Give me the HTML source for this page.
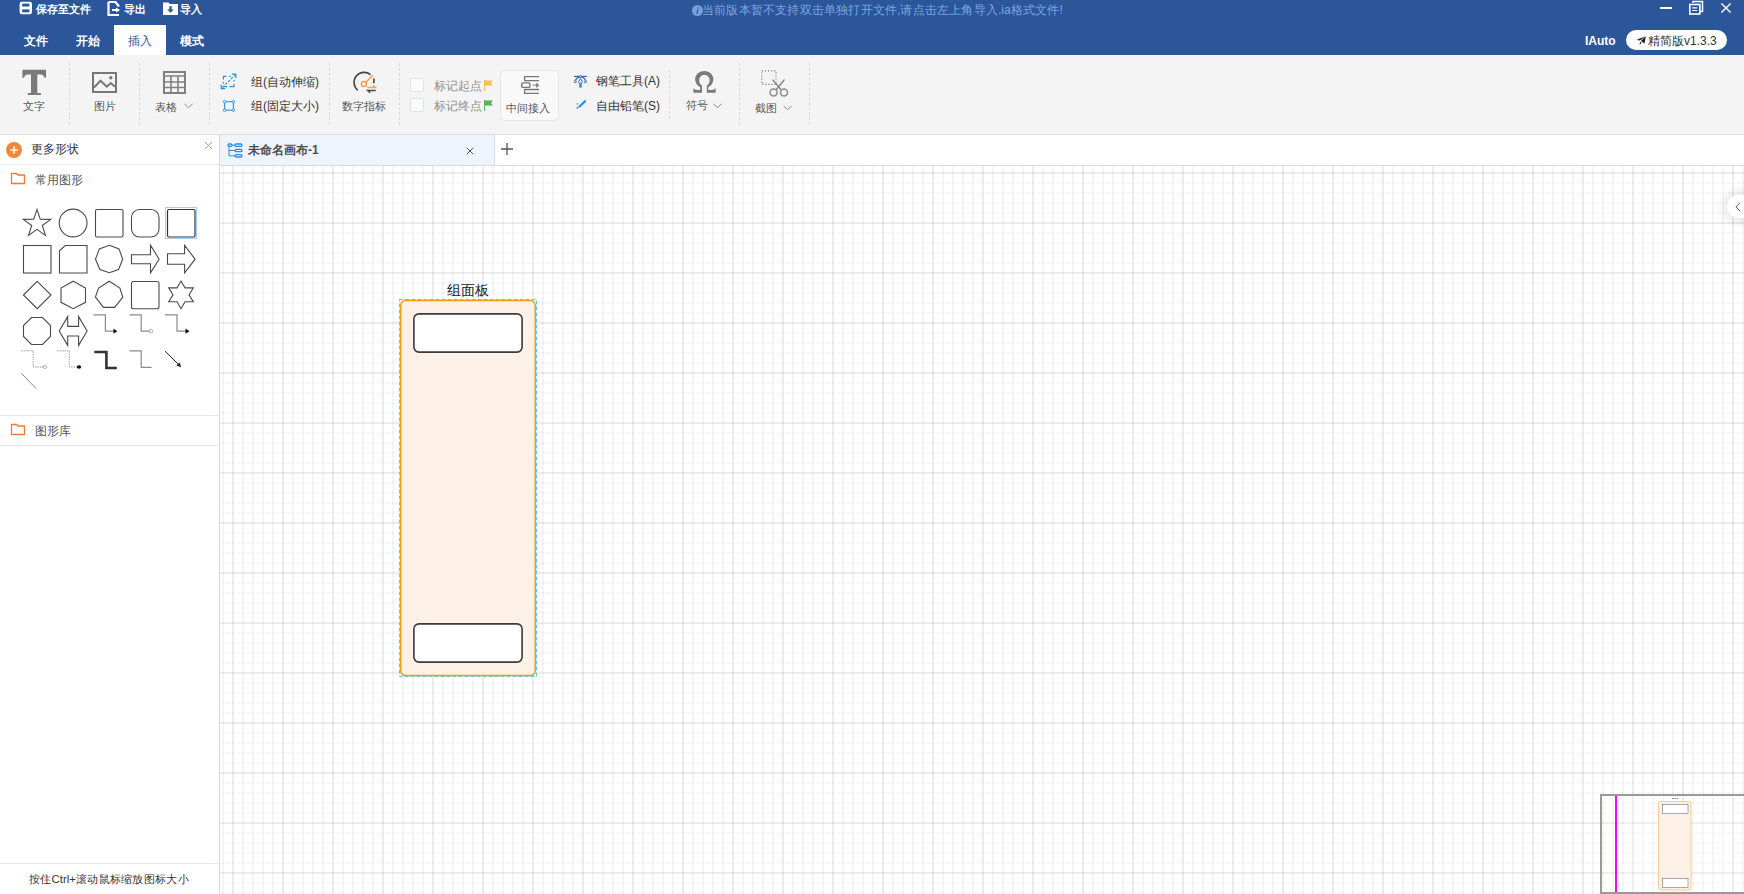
<!DOCTYPE html>
<html><head><meta charset="utf-8">
<style>
*{margin:0;padding:0;box-sizing:border-box}
html,body{width:1744px;height:894px;overflow:hidden;background:#fff;font-family:"Liberation Sans",sans-serif;}
.a{position:absolute}
svg{display:block}
#title{left:0;top:0;width:1744px;height:55px;background:#2b579a}
.wt{color:#fff;font-size:11px;font-weight:bold;white-space:nowrap;line-height:12px}
.menu{color:#fff;font-size:12px;line-height:14px;white-space:nowrap;font-weight:bold;width:52px;text-align:center}
#toolbar{left:0;top:55px;width:1744px;height:80px;background:#f4f4f4;border-bottom:1px solid #dcdcdc}
.sep{width:0;border-left:1px dashed #d9d9d9}
.lbl{font-size:11px;color:#555;line-height:12px;white-space:nowrap}
.txt{font-size:12px;color:#333;line-height:13px;white-space:nowrap}
#left{left:0;top:135px;width:220px;height:759px;background:#fff;border-right:1px solid #d9d9d9}
#tabbar{left:220px;top:135px;width:1524px;height:31px;background:#fff;border-bottom:1px solid #d9d9d9}
#canvas{left:220px;top:166px;width:1524px;height:728px;background:#fff}
i{font-style:normal;display:inline-block;width:1em;text-align:center;position:relative}
.nocjk i{-webkit-text-fill-color:transparent}
.nocjk i::after{content:"";position:absolute;left:.09em;right:.09em;top:50%;height:.82em;margin-top:-.41em;background:currentColor;opacity:.42}
</style></head><body>
<div id="title" class="a">
  <!-- save icon -->
  <svg class="a" style="left:19px;top:1px" width="14" height="14" viewBox="19 1 14 14"><rect x="19.6" y="1.7" width="12.4" height="12.6" rx="2.2" fill="#fff"/><rect x="22.2" y="3.6" width="7.2" height="2.9" fill="#2b579a"/><rect x="22.2" y="9.4" width="7.2" height="2.9" fill="#2b579a"/></svg>
  <div class="a wt" style="left:36px;top:3px"><i>保</i><i>存</i><i>至</i><i>文</i><i>件</i></div>
  <!-- export icon -->
  <svg class="a" style="left:106px;top:0px" width="16" height="17" viewBox="0 0 16 17"><path d="M2.5 2h7l3.5 4.5M2.5 2v13h10.5" fill="none" stroke="#fff" stroke-width="2.2"/><path d="M6 10h5" stroke="#fff" stroke-width="2"/><path d="M10 7.5l4 2.5-4 2.5z" fill="#fff"/></svg>
  <div class="a wt" style="left:124px;top:3px"><i>导</i><i>出</i></div>
  <!-- import icon -->
  <svg class="a" style="left:162px;top:1px" width="17" height="15" viewBox="0 0 17 15"><path d="M1 1.5h5.5l1.5 1.5h8v11H1z" fill="#fff"/><path d="M7.3 5.3h2.4v3.2h2.2l-3.4 3.2-3.4-3.2h2.2z" fill="#2b579a"/></svg>
  <div class="a wt" style="left:180px;top:3px"><i>导</i><i>入</i></div>
  <!-- info -->
  <svg class="a" style="left:692px;top:5px" width="11" height="11" viewBox="0 0 11 11"><circle cx="5.5" cy="5.5" r="5.5" fill="#76a0dc"/><path d="M6.2 2.2v1.2M5.8 4.6l-.9 4.4" stroke="#2b579a" stroke-width="1.2"/></svg>
  <div class="a" style="left:702px;top:3px;font-size:12.2px;line-height:14px;color:#7ba4e0;white-space:nowrap"><i>当</i><i>前</i><i>版</i><i>本</i><i>暂</i><i>不</i><i>支</i><i>持</i><i>双</i><i>击</i><i>单</i><i>独</i><i>打</i><i>开</i><i>文</i><i>件</i>,<i>请</i><i>点</i><i>击</i><i>左</i><i>上</i><i>角</i><i>导</i><i>入</i>.ia<i>格</i><i>式</i><i>文</i><i>件</i>!</div>
  <!-- window controls -->
  <div class="a" style="left:1660px;top:7px;width:12px;height:1.7px;background:#fff"></div>
  <svg class="a" style="left:1688px;top:0px" width="16" height="16" viewBox="0 0 16 16"><path d="M5 3V1.5h9.5v10H12" fill="none" stroke="#fff" stroke-width="1.5"/><rect x="1.8" y="4.5" width="10" height="9.5" fill="none" stroke="#fff" stroke-width="1.6"/><path d="M4.2 7.8h5M4.2 10.5h5" stroke="#fff" stroke-width="1.2"/></svg>
  <svg class="a" style="left:1720px;top:2px" width="12" height="12" viewBox="0 0 12 12"><path d="M1.4 1.4l9.2 9.2M10.6 1.4l-9.2 9.2" stroke="#fff" stroke-width="1.4"/></svg>
  <!-- menu -->
  <div class="a menu" style="left:10px;top:34px"><i>文</i><i>件</i></div>
  <div class="a menu" style="left:62px;top:34px"><i>开</i><i>始</i></div>
  <div class="a" style="left:114px;top:25px;width:52px;height:30px;background:#fff"></div>
  <div class="a menu" style="left:114px;top:34px;color:#2b579a;font-weight:normal"><i>插</i><i>入</i></div>
  <div class="a menu" style="left:166px;top:34px"><i>模</i><i>式</i></div>
  <div class="a" style="left:1585px;top:34px;font-size:12px;font-weight:bold;color:#fff;line-height:14px">IAuto</div>
  <div class="a" style="left:1626px;top:30px;width:101px;height:20px;border-radius:10px;background:#fff"></div>
  <svg class="a" style="left:1636px;top:35px" width="11" height="11" viewBox="1636 35 11 11"><path d="M1637.2 39.5L1645.8 36.3L1640.3 40.2L1638.6 40.6Z" fill="#0f1a33"/><path d="M1645.8 36.3L1644.5 43.4L1641 41.1Z" fill="#0f1a33"/><path d="M1640.1 41.7L1641.6 42.7L1639.6 45Z" fill="#0f1a33"/></svg>
  <div class="a" style="left:1648px;top:34px;font-size:12px;color:#333;line-height:14px;white-space:nowrap"><i>精</i><i>简</i><i>版</i>v1.3.3</div>
</div>

<div id="toolbar" class="a">
  <div class="a sep" style="left:69px;top:8px;height:62px"></div>
  <div class="a sep" style="left:139px;top:8px;height:62px"></div>
  <div class="a sep" style="left:209px;top:8px;height:62px"></div>
  <div class="a sep" style="left:329px;top:8px;height:62px"></div>
  <div class="a sep" style="left:399px;top:8px;height:62px"></div>
  <div class="a sep" style="left:669px;top:15px;height:49px"></div>
  <div class="a sep" style="left:739px;top:8px;height:62px"></div>
  <div class="a sep" style="left:809px;top:8px;height:62px"></div>

  <!-- T -->
  <svg class="a" style="left:20px;top:13px" width="30" height="30" viewBox="20 68 30 30"><path d="M22.4 69.8H46V77.8H44.6Q43.5 75 41.5 74.6H37.3V93H40.9V95H27.8V93H31V74.6H26.9Q24.9 75 23.8 77.8H22.4Z" fill="#7a7a7a"/></svg>
  <div class="a lbl" style="left:23px;top:45px"><i>文</i><i>字</i></div>
  <!-- image -->
  <svg class="a" style="left:92px;top:17px" width="25" height="21" viewBox="0 0 25 21"><rect x="1" y="1" width="23" height="19" fill="none" stroke="#777" stroke-width="2"/><path d="M2 15.5l6.5-6.8 6.3 6 3.9-3.6 4.3 3.6" fill="none" stroke="#777" stroke-width="2"/><circle cx="18.8" cy="5.7" r="1.7" fill="#777"/></svg>
  <div class="a lbl" style="left:94px;top:45px"><i>图</i><i>片</i></div>
  <!-- table -->
  <svg class="a" style="left:163px;top:16px" width="23" height="23" viewBox="0 0 23 23"><rect x="1" y="1" width="21" height="21" fill="none" stroke="#808080" stroke-width="2"/><path d="M1 5h21M1 11h21M1 16.5h21M8 5v17M15 5v17" stroke="#808080" stroke-width="1.6"/></svg>
  <div class="a lbl" style="left:155px;top:46px"><i>表</i><i>格</i></div>
  <svg class="a" style="left:184px;top:48px" width="9" height="6" viewBox="0 0 9 6"><path d="M.5 .8l4 4 4-4" fill="none" stroke="#888" stroke-width="1"/></svg>
  <!-- group icons -->
  <svg class="a" style="left:218px;top:16px" width="22" height="20" viewBox="218 71 22 20"><path d="M223.4 79.5V76.4H226.5M229 76.4H230.5M223.4 82V83.5M223.4 86V86.7H227M229.5 86.7H234V84M234 81.5V80" fill="none" stroke="#2a8fde" stroke-width="1.2"/><path d="M222.5 87.5L235 75" stroke="#2a8fde" stroke-width="1.1" stroke-dasharray="2.5 1.5"/><path d="M232 74.1H235.8V77.9M221.3 84.8V88.6H225.1" fill="none" stroke="#2a8fde" stroke-width="1.2"/></svg>
  <div class="a txt" style="left:251px;top:21px"><i>组</i>(<i>自</i><i>动</i><i>伸</i><i>缩</i>)</div>
  <svg class="a" style="left:220px;top:44px" width="18" height="15" viewBox="220 99 18 15"><rect x="224.6" y="101.7" width="8.8" height="8.5" fill="none" stroke="#2a8fde" stroke-width="1.1"/><g fill="#fff" stroke="#2a8fde" stroke-width="0.9"><circle cx="224.6" cy="101.7" r="1.3"/><circle cx="233.4" cy="101.7" r="1.3"/><circle cx="224.6" cy="110.2" r="1.3"/><circle cx="233.4" cy="110.2" r="1.3"/></g></svg>
  <div class="a txt" style="left:251px;top:45px"><i>组</i>(<i>固</i><i>定</i><i>大</i><i>小</i>)</div>
  <!-- gauge -->
  <svg class="a" style="left:348px;top:11px" width="32" height="32" viewBox="348 66 32 32"><path d="M357.8 90.3A10 10 0 0 1 370.5 74.6" fill="none" stroke="#454545" stroke-width="1.6"/><path d="M373.9 78.5V83.2" stroke="#454545" stroke-width="1.6"/><circle cx="363.9" cy="84.1" r="2.5" fill="none" stroke="#f5a04a" stroke-width="1.5"/><path d="M365.7 82.3L373 75.3" stroke="#f5a04a" stroke-width="1.5"/><path d="M367.3 87.5H375.5L373 85.2" fill="none" stroke="#f5a04a" stroke-width="1.3"/><path d="M375.7 90.5H367.5L370.2 92.8" fill="none" stroke="#454545" stroke-width="1.3"/><g fill="#f8c89a"><circle cx="363.8" cy="75" r=".6"/><circle cx="357" cy="82.7" r=".6"/><circle cx="371" cy="82.7" r=".6"/></g></svg>
  <div class="a lbl" style="left:342px;top:45px"><i>数</i><i>字</i><i>指</i><i>标</i></div>
  <!-- checkboxes -->
  <div class="a" style="left:410px;top:23px;width:14px;height:14px;border:1px solid #e0e3ea;border-radius:2px;background:#fbfbfb"></div>
  <div class="a" style="left:410px;top:43px;width:14px;height:14px;border:1px solid #e0e3ea;border-radius:2px;background:#fbfbfb"></div>
  <div class="a txt" style="left:434px;top:25px;color:#8e8e8e"><i>标</i><i>记</i><i>起</i><i>点</i></div>
  <div class="a txt" style="left:434px;top:45px;color:#8e8e8e"><i>标</i><i>记</i><i>终</i><i>点</i></div>
  <svg class="a" style="left:484px;top:25px" width="9" height="11" viewBox="0 0 9 11"><path d="M.5 0v11" stroke="#f7c04e" stroke-width="1.3"/><path d="M1 .5h8l-2 2.5 2 2.5H1z" fill="#f7c055"/></svg>
  <svg class="a" style="left:484px;top:45px" width="9" height="11" viewBox="0 0 9 11"><path d="M.5 0v11" stroke="#5cb85c" stroke-width="1.3"/><path d="M1 .5h8l-2 2.5 2 2.5H1z" fill="#56b25a"/></svg>
  <!-- 中间接入 button -->
  <div class="a" style="left:500px;top:15px;width:59px;height:51px;border:1px solid #e6e6e6;border-radius:5px;background:#f9f9f9"></div>
  <svg class="a" style="left:518px;top:18px" width="24" height="22" viewBox="518 73 24 22"><path d="M539 76.6H524.6V80.6H539M539 89.5H524.6V93.3H539" fill="none" stroke="#777" stroke-width="1.3"/><rect x="521.7" y="82.9" width="8.2" height="4.5" rx="1" fill="none" stroke="#777" stroke-width="1.4"/><path d="M532.8 85.2H537" stroke="#999" stroke-width="1.3"/><path d="M536.3 82.5L539.2 85.2L536.3 87.9Z" fill="#777"/></svg>
  <div class="a lbl" style="left:506px;top:47px"><i>中</i><i>间</i><i>接</i><i>入</i></div>
  <!-- pen -->
  <svg class="a" style="left:572px;top:18px" width="17" height="17" viewBox="572 73 17 17"><path d="M574.1 76.4H586.9" stroke="#2e5ea8" stroke-width="1.1"/><path d="M580.5 76.6Q576.5 77.5 575.3 80.6M580.5 76.6Q584.5 77.5 585.5 80.6" fill="none" stroke="#2e5ea8" stroke-width="1.1"/><circle cx="580.5" cy="76.4" r="1" fill="#fff" stroke="#2e5ea8" stroke-width=".9"/><circle cx="575.3" cy="81.6" r="1.1" fill="#fff" stroke="#2e5ea8" stroke-width=".9"/><circle cx="585.5" cy="81.6" r="1.1" fill="#fff" stroke="#2e5ea8" stroke-width=".9"/><path d="M580.5 78.6L578.7 81.6L579.5 83.8H581.5L582.3 81.6Z" fill="none" stroke="#2e5ea8" stroke-width="1"/><rect x="579.3" y="84.2" width="2.4" height="3.4" fill="#3b7bd0"/><path d="M576.5 83.5L578.5 86.5M584.5 83.5L582.5 86.5" stroke="#b8c4d8" stroke-width=".7" stroke-dasharray="1 1"/></svg>
  <div class="a txt" style="left:596px;top:20px"><i>钢</i><i>笔</i><i>工</i><i>具</i>(A)</div>
  <svg class="a" style="left:574px;top:44px" width="14" height="14" viewBox="574 99 14 14"><path d="M579.6 106.5L585 101.2" stroke="#2a90e0" stroke-width="2.3" stroke-linecap="round"/><path d="M577.3 103.2V104.6M578 106.5L576.8 108.8" stroke="#2a90e0" stroke-width="1.3"/></svg>
  <div class="a txt" style="left:596px;top:45px"><i>自</i><i>由</i><i>铅</i><i>笔</i>(S)</div>
  <!-- omega -->
  <svg class="a" style="left:690px;top:15px" width="30" height="25" viewBox="690 70 30 25"><path d="M702 92.8H693.4V88.2Q694.5 90 697 90H700.2V87.2A9.05 8.6 0 1 1 708.3 87.2V90H711.5Q714.5 90 715.7 88.2V92.8H706.8V85.8A5.25 5.9 0 1 0 702 85.8Z" fill="#7a7a7a"/></svg>
  <div class="a lbl" style="left:686px;top:44px"><i>符</i><i>号</i></div>
  <svg class="a" style="left:713px;top:48px" width="9" height="6" viewBox="0 0 9 6"><path d="M.5 .8l4 4 4-4" fill="none" stroke="#888" stroke-width="1"/></svg>
  <!-- crop -->
  <svg class="a" style="left:756px;top:11px" width="36" height="34" viewBox="756 66 36 34"><rect x="761.8" y="70.9" width="14.2" height="13.5" fill="none" stroke="#7a7a7a" stroke-width="1.1" stroke-dasharray="1.2 1.9"/><path d="M772.7 79.7L781.5 90.3M784.5 79.5L775.8 90.3" stroke="#8a8a8a" stroke-width="1.5"/><circle cx="773.6" cy="92.6" r="3.5" fill="#f4f4f4" stroke="#8a8a8a" stroke-width="1.5"/><circle cx="784" cy="92.6" r="3.5" fill="#f4f4f4" stroke="#8a8a8a" stroke-width="1.5"/></svg>
  <div class="a lbl" style="left:755px;top:47px"><i>截</i><i>图</i></div>
  <svg class="a" style="left:783px;top:50px" width="9" height="6" viewBox="0 0 9 6"><path d="M.5 .8l4 4 4-4" fill="none" stroke="#888" stroke-width="1"/></svg>
</div>

<div id="left" class="a">
  <svg class="a" style="left:6px;top:7px" width="16" height="16" viewBox="0 0 16 16"><circle cx="8" cy="8" r="8" fill="#f5873a"/><path d="M8 4.2v7.6M4.2 8h7.6" stroke="#fff" stroke-width="1.5"/></svg>
  <div class="a txt" style="left:31px;top:8px"><i>更</i><i>多</i><i>形</i><i>状</i></div>
  <svg class="a" style="left:204px;top:6px" width="9" height="9" viewBox="0 0 9 9"><path d="M1 1l7 7M8 1l-7 7" stroke="#999" stroke-width="0.9"/></svg>
  <div class="a" style="left:0;top:29px;width:219px;height:1px;background:#e4e7f0"></div>
  <svg class="a" style="left:10px;top:37px" width="16" height="13" viewBox="0 0 16 13"><path d="M1.5 1.5h5l1.5 1.5h6.5v8.5h-13z" fill="none" stroke="#f37a2a" stroke-width="1.3"/></svg>
  <div class="a txt" style="left:35px;top:39px;color:#555"><i>常</i><i>用</i><i>图</i><i>形</i></div>

  <svg class="a" style="left:0;top:60px" width="219" height="200" viewBox="0 195 219 200">
   <g fill="#fff" stroke="#4a4a4a" stroke-width="1.1" stroke-linejoin="miter">
    <polygon points="37.0,209.4 40.3,219.3 50.7,219.4 42.3,225.5 45.5,235.4 37.0,229.4 28.5,235.4 31.7,225.5 23.3,219.4 33.7,219.3"/>
    <circle cx="73.1" cy="223" r="13.9"/>
    <rect x="95.5" y="209.5" width="27.5" height="27.5" rx="1.5"/>
    <rect x="131.5" y="209.5" width="27.5" height="27.5" rx="8"/>
    <rect x="165.5" y="207.5" width="31" height="31" fill="none" stroke="#a9cff7" stroke-width="1"/>
    <rect x="167.5" y="209.5" width="27.5" height="27.5" rx="1.5" stroke="#333" stroke-width="1.2"/>
    <rect x="23.5" y="245.5" width="27.5" height="27.5"/>
    <path d="M65.2 245.5H87V273H59.5V250.8Z"/>
    <polygon points="109.3,245.3 119,248.9 122.7,259.2 118.6,269.5 109.3,272.7 99.9,269.5 95.5,259.2 99.3,248.9"/>
    <path d="M131.5 254.7H150.5V245.3L159.1 259.2L150.5 272.8V263.7H131.5Z"/>
    <path d="M167.5 253.8H184.6V245.3L195.1 259.2L184.6 272.8V264.3H167.5Z"/>
    <path d="M37.2 281.3L51 295L37.2 308.7L23.4 295Z"/>
    <polygon points="73.3,281.2 85.5,288.1 85.5,302.3 73.3,308.7 61,302.3 61,288.1"/>
    <polygon points="109.3,281.2 119.9,288.1 122.8,297.1 114.7,307.4 103.5,307.4 95.4,297.1 98.6,288.1"/>
    <rect x="131.5" y="281.5" width="27.5" height="27.2" rx="2"/>
    <polygon points="181.0,281.0 185.0,287.9 193.3,287.9 189.0,294.9 193.3,301.8 185.0,301.8 181.0,308.7 177.0,301.8 168.7,301.8 173.0,294.9 168.7,287.9 177.0,287.9"/>
    <polygon points="31.5,317.5 42.5,317.5 50.5,325.5 50.5,336.5 42.5,344.5 31.5,344.5 23.5,336.5 23.5,325.5"/>
    <path d="M59.2 331L67.7 316.6V326.4H78.6V316.6L87.1 331L78.6 345.4V336H67.7V345.4Z"/>
   </g>
   <g fill="none" stroke="#8a8a8a" stroke-width="1.2">
    <path d="M93.3 314.8H105.4V331.2H114"/>
    <path d="M129.4 314.8H141.2V331.2H150"/>
    <path d="M165 314.8H177V331.2H186"/>
    <path d="M129.4 350.8H141.2V367.3H151.6"/>
   </g>
   <path d="M113.5 328.6L117.3 331.2L113.5 333.8Z" fill="#111"/>
   <path d="M185.5 328.6L189.5 331.2L185.5 333.8Z" fill="#111"/>
   <circle cx="151" cy="331.2" r="1.8" fill="#fff" stroke="#999" stroke-width="0.8"/>
   <g fill="none" stroke="#9a9a9a" stroke-width="1" stroke-dasharray="1.5 1">
    <path d="M21.2 350.8H33.2V367H43"/>
    <path d="M57.2 350.8H69.3V367H78"/>
   </g>
   <path d="M42.5 367l2.5-1.8 2 1.8-2 1.8z" fill="#fff" stroke="#999" stroke-width="0.8"/>
   <ellipse cx="79" cy="367" rx="2.2" ry="1.7" fill="#111"/>
   <path d="M94.3 352H106.4V368H116.8" fill="none" stroke="#333" stroke-width="2.6"/>
   <path d="M165 351.2L180 365.8" stroke="#222" stroke-width="1"/>
   <path d="M181.2 367.2L176.3 365.6L179.6 362.4Z" fill="#222"/>
   <path d="M21.4 373.4L36.2 388.7" stroke="#888" stroke-width="1"/>
  </svg>
  <div class="a" style="left:0;top:280px;width:219px;height:1px;background:#e4e7f0"></div>
  <svg class="a" style="left:10px;top:288px" width="16" height="13" viewBox="0 0 16 13"><path d="M1.5 1.5h5l1.5 1.5h6.5v8.5h-13z" fill="none" stroke="#f37a2a" stroke-width="1.3"/></svg>
  <div class="a txt" style="left:35px;top:290px;color:#555"><i>图</i><i>形</i><i>库</i></div>
  <div class="a" style="left:0;top:310px;width:219px;height:1px;background:#e4e7f0"></div>
  <div class="a" style="left:0;top:728px;width:219px;height:1px;background:#e4e7f0"></div>
  <div class="a lbl" style="left:29px;top:738px;color:#333;font-size:11.3px"><i>按</i><i>住</i>Ctrl+<i>滚</i><i>动</i><i>鼠</i><i>标</i><i>缩</i><i>放</i><i>图</i><i>标</i><i>大</i><i>小</i></div>
</div>

<div id="tabbar" class="a">
  <div class="a" style="left:0;top:0;width:275px;height:30px;background:#eef3fd;border-right:1px solid #dcdcdc"></div>
  <svg class="a" style="left:7px;top:8px" width="16" height="15" viewBox="0 0 16 15"><rect x="1" y="1" width="4" height="2.4" rx="1.2" fill="none" stroke="#2a8de0" stroke-width="1.3"/><rect x="8" y="1" width="7" height="2.4" rx="1.2" fill="none" stroke="#2a8de0" stroke-width="1.3"/><rect x="8" y="6.3" width="7" height="2.4" rx="1.2" fill="none" stroke="#2a8de0" stroke-width="1.3"/><rect x="8" y="11.6" width="7" height="2.4" rx="1.2" fill="none" stroke="#2a8de0" stroke-width="1.3"/><path d="M2 3.4v9.4h6M2 7.5h6M5 2.2h3" fill="none" stroke="#2a8de0" stroke-width="1"/></svg>
  <div class="a txt" style="left:28px;top:9px;color:#4d4d4d;font-weight:bold"><i>未</i><i>命</i><i>名</i><i>画</i><i>布</i>-1</div>
  <svg class="a" style="left:246px;top:12px" width="8" height="8" viewBox="0 0 8 8"><path d="M.8 .8l6.4 6.4M7.2 .8L.8 7.2" stroke="#555" stroke-width="1"/></svg>
  <svg class="a" style="left:280px;top:7px" width="14" height="14" viewBox="0 0 14 14"><path d="M7 1v12M1 7h12" stroke="#555" stroke-width="1.3"/></svg>
</div>

<div id="canvas" class="a">
  <svg class="a" style="left:0;top:0" width="1524" height="728">
    <defs>
      <pattern id="g" width="50" height="50" patternUnits="userSpaceOnUse" x="12" y="6">
        <rect x="10" y="0" width="2" height="50" fill="rgba(0,0,0,0.038)"/>
        <rect x="20" y="0" width="2" height="50" fill="rgba(0,0,0,0.038)"/>
        <rect x="30" y="0" width="2" height="50" fill="rgba(0,0,0,0.038)"/>
        <rect x="40" y="0" width="2" height="50" fill="rgba(0,0,0,0.038)"/>
        <path d="M0 11h50M0 21h50M0 31h50M0 41h50" stroke="rgba(0,0,0,0.034)" stroke-width="2" stroke-dasharray="2 1 2 1 3 1"/>
        <rect x="0" y="0" width="2" height="50" fill="rgba(0,0,0,0.075)"/>
        <rect x="0" y="0" width="50" height="2" fill="rgba(0,0,0,0.075)"/>
      </pattern>
    </defs>
    <rect width="1524" height="728" fill="url(#g)"/>
  </svg>
</div>

<!-- group panel -->
<div class="a" style="left:440px;top:282px;width:56px;text-align:center;font-size:14px;line-height:16px;color:#222;white-space:nowrap"><i>组</i><i>面</i><i>板</i></div>
<svg class="a" style="left:395px;top:295px" width="150" height="390" viewBox="395 295 150 390">
  <rect x="399.5" y="299.5" width="137" height="377" fill="none" stroke="#5ccaf2" stroke-width="1" stroke-dasharray="4 2"/>
  <rect x="400.75" y="300.6" width="134.5" height="375" rx="5" fill="#fdf1e7" stroke="#e9a20f" stroke-width="1.5"/>
  <rect x="413.9" y="313.9" width="108.2" height="38.2" rx="5" fill="#fff" stroke="#3a3a3a" stroke-width="1.6"/>
  <rect x="413.9" y="623.9" width="108.2" height="38.2" rx="5" fill="#fff" stroke="#3a3a3a" stroke-width="1.6"/>
</svg>
<!-- collapse button -->
<div class="a" style="left:1727px;top:195px;width:40px;height:23px;border-radius:12px;background:#fff;box-shadow:0 0 8px 5px rgba(0,0,0,0.08)"></div>
<svg class="a" style="left:1735px;top:202px" width="6" height="10" viewBox="0 0 6 10"><path d="M5 .8L1 4.9 5 9" fill="none" stroke="#555" stroke-width="1"/></svg>
<!-- minimap -->
<div class="a" style="left:1600px;top:794px;width:160px;height:100px;border:2px solid #9a9a9a;background:rgba(255,255,255,0.2)"></div>
<div class="a" style="left:1615px;top:796px;width:2px;height:96px;background:#ff00ff"></div>
<svg class="a" style="left:1655px;top:795px" width="40" height="99" viewBox="1655 795 40 99">
  <path d="M1672 798.5h6" stroke="#777" stroke-width="1.2" stroke-dasharray="1 .6"/>
  <rect x="1658.5" y="801.5" width="32.5" height="88.5" rx="2" fill="#fdf1e7" stroke="#f2cc94" stroke-width="1"/>
  <rect x="1662.5" y="804.5" width="25.5" height="9" fill="#fff" stroke="#6a7280" stroke-width="0.6"/>
  <rect x="1662.5" y="878.5" width="25.5" height="9" fill="#fff" stroke="#6a7280" stroke-width="0.6"/>
</svg>
<script>
(function(){
  var s=document.createElement('span');
  s.style.cssText='position:absolute;left:-2000px;top:0;font-size:100px;line-height:1;white-space:nowrap;font-family:"Liberation Sans",sans-serif';
  s.textContent='\u4e2d\u6587';
  document.body.appendChild(s);
  var w=s.getBoundingClientRect().width;
  document.body.removeChild(s);
  if(w<180){document.documentElement.className+=' nocjk';}
})();
</script>
</body></html>
